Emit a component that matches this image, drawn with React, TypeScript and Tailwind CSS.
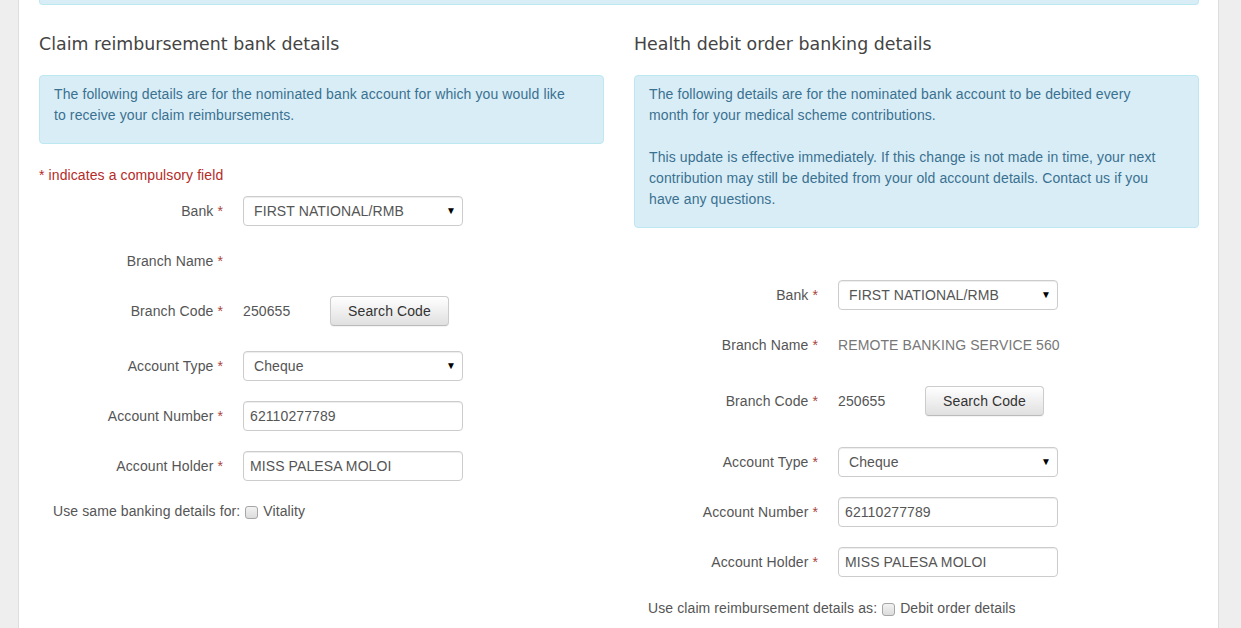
import React from 'react';

const body = { fontFamily: '"Liberation Sans", Arial, sans-serif' };
const heading = { fontFamily: '"DejaVu Sans", "Lucida Grande", sans-serif' };

function Req() {
    return <span className="text-[#a94442]"> *</span>;
}

function Row({ label, children, className = '' }: { label: string; children: React.ReactNode; className?: string }) {
    return (
        <div className={`flex items-center h-[30px] ${className}`}>
            <div className="w-[184px] shrink-0 text-right text-[#555]">
                {label}
                <Req />
            </div>
            <div className="ml-5 flex items-center">{children}</div>
        </div>
    );
}

function Select({ value }: { value: string }) {
    return (
        <div className="w-[220px] h-[30px] border border-[#ccc] rounded-[4px] bg-white shadow-[inset_0_1px_1px_rgba(0,0,0,0.075)] flex items-center justify-between pl-[10px] pr-[6px] text-[#555]">
            <span>{value}</span>
            <span className="text-[10px] text-black leading-none">▼</span>
        </div>
    );
}

function Input({ value }: { value: string }) {
    return (
        <div className="w-[220px] h-[30px] border border-[#ccc] rounded-[4px] bg-white shadow-[inset_0_1px_1px_rgba(0,0,0,0.075)] flex items-center pl-[6px] text-[#555]">
            {value}
        </div>
    );
}

function SearchButton() {
    return (
        <button className="w-[119px] h-[30px] border border-[#ccc] border-b-[#bbb] rounded-[4px] bg-gradient-to-b from-white to-[#e0e0e0] text-[#333] text-[14px] tracking-[0.1px] shadow-[0_1px_1px_rgba(0,0,0,0.05)]">
            Search Code
        </button>
    );
}

function Checkbox() {
    return (
        <span className="inline-block w-[13px] h-[13px] mx-[5px] translate-y-[3px] border border-[#a6a6a6] rounded-[3px] bg-gradient-to-b from-[#f2f2f2] to-[#dcdcdc]" />
    );
}

function InfoBox({ children }: { children: React.ReactNode }) {
    return (
        <div className="mt-5 border border-[#bce8f1] bg-[#d9edf7] rounded-[4px] pt-[8px] pb-[17px] px-[14px] text-[#3a7190] leading-[21px]">
            {children}
        </div>
    );
}

export default function App() {
    return (
        <div className="min-h-screen bg-[#eee] text-[14px] tracking-[0.1px]" style={body}>
            <div className="ml-[18px] w-[1201px] h-[628px] overflow-hidden bg-white border-x border-[#ddd] pl-5 pr-[19px]">
                {/* tail of the alert above */}
                <div className="h-[5px] bg-[#d9edf7] border-x border-b border-[#bce8f1] rounded-b-[4px]" />

                <div className="grid grid-cols-2 gap-[30px]">
                    {/* Claim reimbursement */}
                    <div>
                        <h3 className="mt-[28px] text-[17.4px] leading-[22px] tracking-normal text-[#444]" style={heading}>
                            Claim reimbursement bank details
                        </h3>
                        <InfoBox>
                            The following details are for the nominated bank account for which you would like
                            <br />
                            to receive your claim reimbursements.
                        </InfoBox>
                        <p className="mt-[21px] mb-[10px] h-[21px] leading-[21px] text-[#b52b27]">* indicates a compulsory field</p>

                        <Row label="Bank">
                            <Select value="FIRST NATIONAL/RMB" />
                        </Row>
                        <Row label="Branch Name" className="mt-5">
                            <span />
                        </Row>
                        <Row label="Branch Code" className="mt-5">
                            <span className="w-[87px] text-[#555]">250655</span>
                            <SearchButton />
                        </Row>
                        <Row label="Account Type" className="mt-[25px]">
                            <Select value="Cheque" />
                        </Row>
                        <Row label="Account Number" className="mt-5">
                            <Input value="62110277789" />
                        </Row>
                        <Row label="Account Holder" className="mt-5">
                            <Input value="MISS PALESA MOLOI" />
                        </Row>
                        <div className="mt-5 pl-[14px] h-[21px] leading-[21px] text-[#555]">
                            Use same banking details for:
                            <Checkbox />
                            Vitality
                        </div>
                    </div>

                    {/* Health debit order */}
                    <div>
                        <h3 className="mt-[28px] text-[17.4px] leading-[22px] tracking-normal text-[#444]" style={heading}>
                            Health debit order banking details
                        </h3>
                        <InfoBox>
                            <p>
                                The following details are for the nominated bank account to be debited every
                                <br />
                                month for your medical scheme contributions.
                            </p>
                            <p className="mt-[21px]">
                                This update is effective immediately. If this change is not made in time, your next
                                <br />
                                contribution may still be debited from your old account details. Contact us if you
                                <br />
                                have any questions.
                            </p>
                        </InfoBox>
                        <div className="mt-5 mb-[11px] h-[21px]" />

                        <Row label="Bank">
                            <Select value="FIRST NATIONAL/RMB" />
                        </Row>
                        <Row label="Branch Name" className="mt-5">
                            <span className="text-[#777]">REMOTE BANKING SERVICE 560</span>
                        </Row>
                        <Row label="Branch Code" className="mt-[26px]">
                            <span className="w-[87px] text-[#555]">250655</span>
                            <SearchButton />
                        </Row>
                        <Row label="Account Type" className="mt-[31px]">
                            <Select value="Cheque" />
                        </Row>
                        <Row label="Account Number" className="mt-5">
                            <Input value="62110277789" />
                        </Row>
                        <Row label="Account Holder" className="mt-5">
                            <Input value="MISS PALESA MOLOI" />
                        </Row>
                        <div className="mt-[21px] pl-[14px] h-[21px] leading-[21px] text-[#555]">
                            Use claim reimbursement details as:
                            <Checkbox />
                            Debit order details
                        </div>
                    </div>
                </div>
            </div>
        </div>
    );
}
